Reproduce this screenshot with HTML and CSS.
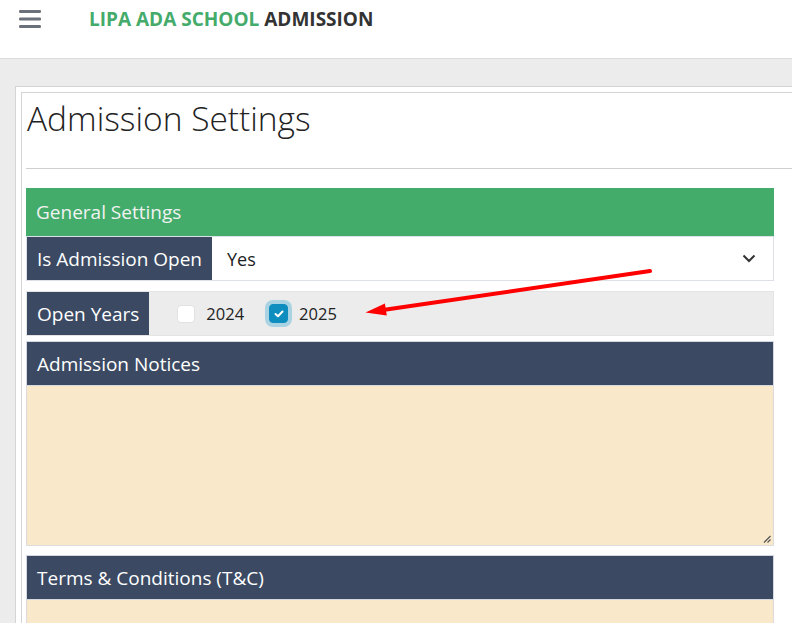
FILE: index.html
```html
<!DOCTYPE html>
<html lang="en">
<head>
<meta charset="utf-8">
<title>Admission Settings</title>
<link rel="stylesheet" href="styles.css">
</head>
<body>
<header class="topbar">
  <span class="menu" aria-label="menu">
    <svg width="22" height="19" viewBox="0 0 22 19"><rect x="0" y="0" width="22" height="3" rx="1.2"/><rect x="0" y="7.5" width="22" height="3" rx="1.2"/><rect x="0" y="15" width="22" height="3" rx="1.2"/></svg>
  </span>
  <h1 class="brand"><span class="brand-green">LIPA ADA SCHOOL</span> ADMISSION</h1>
</header>
<main class="page">
  <div class="outer">
    <div class="inner">
      <h2 class="title">Admission Settings</h2>
      <hr class="rule">
      <div class="form">
        <div class="bar bar-green">General Settings</div>
        <div class="group">
          <span class="glabel">Is Admission Open</span>
          <div class="select">
            <span>Yes</span>
            <svg class="chev" width="14" height="9" viewBox="0 0 14 9"><path d="M1.5 1.5 L7 7 L12.5 1.5" fill="none" stroke="#333" stroke-width="2"/></svg>
          </div>
        </div>
        <div class="group group-years">
          <span class="glabel">Open Years</span>
          <div class="checks">
            <label class="check"><span class="box"></span><span>2024</span></label>
            <label class="check"><span class="box box-on"><svg width="10" height="8" viewBox="0 0 10 8"><path d="M1.5 4 L4 6.3 L8.5 1.5" fill="none" stroke="#fff" stroke-width="2" stroke-linecap="round" stroke-linejoin="round"/></svg></span><span>2025</span></label>
          </div>
        </div>
        <div class="bar bar-dark">Admission Notices</div>
        <div class="textarea">
          <svg class="grip" width="8" height="8" viewBox="0 0 8 8"><path d="M7.5 1 L1 7.5 M7.5 4.5 L4.5 7.5" stroke="#555" stroke-width="1.2"/></svg>
        </div>
        <div class="bar bar-dark bar-tc">Terms &amp; Conditions (T&amp;C)</div>
        <div class="textarea"></div>
      </div>
    </div>
  </div>
</main>
<svg class="annot" width="792" height="623" viewBox="0 0 792 623">
  <line x1="650" y1="271" x2="383" y2="310" stroke="#ff0000" stroke-width="4" stroke-linecap="round"/>
  <polygon points="365.5,312.5 384.9,303.5 386.8,315.6" fill="#ff0000"/>
</svg>
</body>
</html>
```
FILE: styles.css
```css
* { box-sizing: border-box; }
html, body { margin: 0; padding: 0; }
body {
  font-family: "Open Sans", "Liberation Sans", sans-serif;
  background: #ececec;
  width: 792px;
  height: 623px;
  overflow: hidden;
  position: relative;
  color: #333;
}
.topbar {
  height: 59px;
  background: #fff;
  border-bottom: 1px solid #dcdcdc;
  display: flex;
  align-items: flex-start;
  padding-left: 19px;
}
.menu { display: block; margin-top: 10px; width: 22px; height: 19px; }
.menu svg { display: block; fill: #6b717a; }
.brand {
  margin: 0 0 0 48px;
  font-size: 19px;
  font-weight: 700;
  line-height: 26px;
  padding-top: 6px;
  color: #333;
  white-space: nowrap;
}
.brand-green { color: #45ab6b; }
.page { padding: 27px 0 0 15px; }
.outer {
  width: 820px;
  background: #fff;
  border: 1px solid #d4d4d4;
  padding: 5px;
  height: 600px;
}
.inner {
  border: 1px solid #d4d4d4;
  padding: 0 4px;
  height: 100%;
}
.title {
  margin: 0 0 0 1px;
  font-size: 33.5px;
  font-weight: 300;
  line-height: 50px;
  color: #222;
}
.rule {
  margin: 25px 0 19px 0;
  border: 0;
  border-top: 1px solid #cfcfcf;
  height: 0;
}
.form { width: 748px; }
.bar {
  display: flex;
  align-items: center;
  padding-left: 10px;
  font-size: 19px;
  color: #fff;
}
.bar-green { height: 48px; background: #43ac6a; color: #f2f2f2; }
.bar-dark {
  height: 45px;
  background: #3b4a62;
  border: 1px solid #d5d8de;
}
.group {
  display: flex;
  height: 45px;
  border: 1px solid #dde0e6;
  background: #fff;
}
.glabel {
  display: flex;
  align-items: center;
  padding: 0 10px;
  background: #3b4a62;
  color: #fff;
  font-size: 19px;
  white-space: nowrap;
}
.select {
  flex: 1;
  display: flex;
  align-items: center;
  justify-content: space-between;
  padding: 0 17px 0 15px;
  font-size: 18px;
  color: #222;
}
.chev { display: block; }
.group-years {
  margin-top: 10px;
  background: #ececec;
  border-color: #e4e4e4;
}
.checks {
  display: flex;
  align-items: center;
  gap: 25px;
  padding-left: 28px;
}
.check {
  display: flex;
  align-items: center;
  gap: 11px;
  font-size: 16.5px;
  color: #222;
}
.box {
  width: 18px;
  height: 18px;
  border-radius: 4px;
  background: #fff;
  border: 1px solid #e2e2e2;
  display: flex;
  align-items: center;
  justify-content: center;
}
.box-on {
  width: 19px;
  height: 19px;
  background: #0d8ebf;
  border-color: #0d8ebf;
  box-shadow: 0 0 0 4px #a9d3e3;
}
.group-years + .bar-dark { margin-top: 5px; }
.textarea {
  height: 160px;
  background: #f9e8ca;
  border: 1px solid #dcdcdc;
  border-top: 0;
  position: relative;
}
.grip { position: absolute; right: 2px; bottom: 2px; }
.bar-tc { margin-top: 9px; }
.annot { position: absolute; left: 0; top: 0; pointer-events: none; }
```
